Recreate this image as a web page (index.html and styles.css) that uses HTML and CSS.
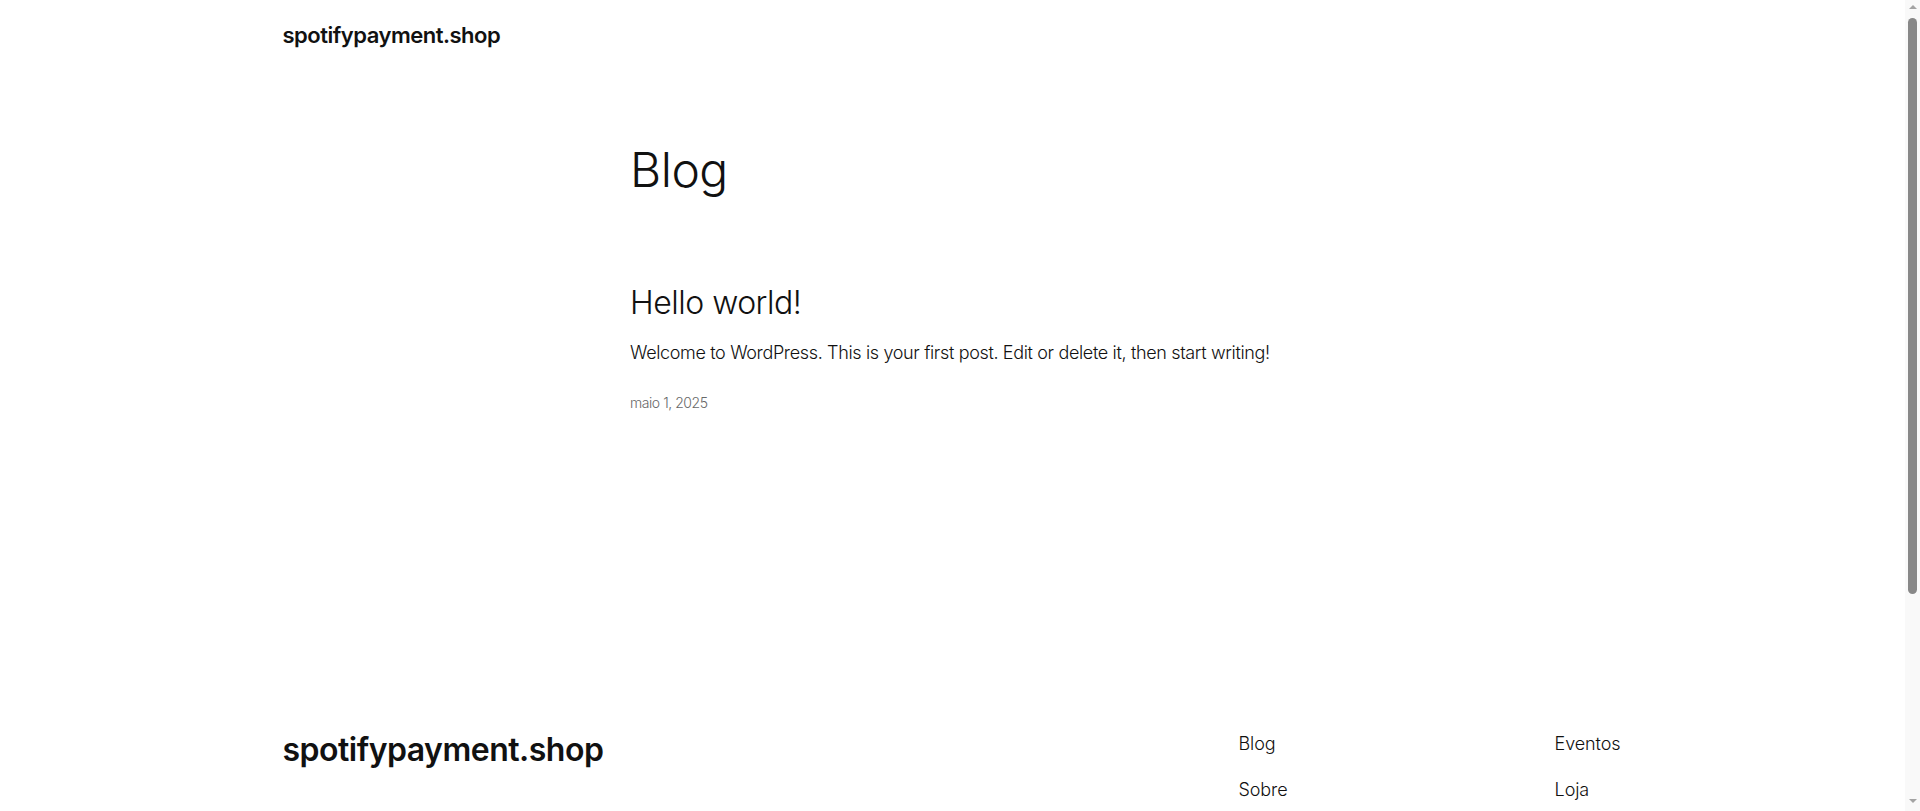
FILE: index.html
```html
<!DOCTYPE html>
<html lang="pt-BR">
<head>
    <meta charset="UTF-8">
    <meta name="viewport" content="width=device-width, initial-scale=1.0">
    <title>Blog – spotifypayment.shop</title>
    <link rel="stylesheet" href="styles.css">
</head>
<body>
    <header class="site-header">
        <a class="site-title" href="#">spotifypayment.shop</a>
    </header>

    <main class="content">
        <h1 class="page-title">Blog</h1>

        <article class="post">
            <h2 class="post-title"><a href="#">Hello world!</a></h2>
            <p class="post-excerpt">Welcome to WordPress. This is your first post. Edit or delete it, then start writing!</p>
            <div class="post-date">maio 1, 2025</div>
        </article>
    </main>

    <footer class="site-footer">
        <div class="footer-top">
            <a class="footer-title" href="#">spotifypayment.shop</a>
            <nav class="footer-links">
                <div class="footer-col">
                    <a href="#">Blog</a>
                    <a href="#">Sobre</a>
                    <a href="#">Perguntas frequentes</a>
                    <a href="#">Autores</a>
                </div>
                <div class="footer-col">
                    <a href="#">Eventos</a>
                    <a href="#">Loja</a>
                    <a href="#">Padrões</a>
                    <a href="#">Temas</a>
                </div>
            </nav>
        </div>
        <div class="footer-bottom">
            <span>Twenty Twenty-Five</span>
            <span>Desenvolvido com <a href="#">WordPress</a></span>
        </div>
    </footer>

    <!-- window scrollbar -->
    <div class="scrollbar" aria-hidden="true">
        <span class="scroll-arrow up"></span>
        <span class="scroll-thumb"></span>
        <span class="scroll-arrow down"></span>
    </div>
</body>
</html>
```

FILE: styles.css
```css
body {
    margin: 0;
    padding-right: 15px;
    font-family: Inter, "Noto Sans", sans-serif;
    font-weight: 300;
    font-size: 18px;
    line-height: 1.4;
    letter-spacing: -0.35px;
    color: #111111;
    background-color: #ffffff;
}

a {
    color: inherit;
    text-decoration: none;
}

.site-header {
    max-width: 1340px;
    height: 71px;
    margin: 0 auto;
    display: flex;
    align-items: center;
}

    .site-title {
        font-size: 22px;
        font-weight: 600;
        letter-spacing: -0.5px;
    }

.content {
    max-width: 645px;
    margin: 0 auto;
    padding: 72px 0 0;
    min-height: 587px;
}

.page-title {
    margin: 0;
    font-size: 48px;
    font-weight: 300;
    line-height: 1.125;
    letter-spacing: -0.5px;
}

.post {
    margin-top: 88px;
}

    .post-title {
        margin: 0;
        font-size: 32px;
        font-weight: 300;
        line-height: 1.125;
        letter-spacing: -0.5px;
    }

    .post-excerpt {
        margin: 19px 0 0;
    }

    .post-date {
        margin-top: 28px;
        font-size: 14px;
        letter-spacing: -0.45px;
        color: #686868;
    }

.site-footer {
    max-width: 1340px;
    margin: 0 auto;
    padding-top: 1px;
    padding-bottom: 70px;
}

.footer-top {
    display: flex;
    justify-content: space-between;
    align-items: flex-start;
}

    .footer-title {
        font-size: 32px;
        font-weight: 600;
        line-height: 1.2;
        letter-spacing: -0.5px;
    }

.footer-links {
    width: 384px;
    display: flex;
    justify-content: space-between;
    letter-spacing: -0.1px;
}

.footer-col {
    display: flex;
    flex-direction: column;
    gap: 21px;
}

.footer-bottom {
    margin-top: 90px;
    padding-top: 30px;
    display: flex;
    justify-content: space-between;
    font-size: 14px;
}

    .footer-bottom a {
        text-decoration: underline;
    }

.scrollbar {
    position: fixed;
    top: 0;
    right: 0;
    bottom: 0;
    width: 15px;
    background-color: #f9f9f9;
    display: flex;
    flex-direction: column;
    align-items: center;
}

.scroll-arrow {
    width: 0;
    height: 0;
    border-left: 4px solid transparent;
    border-right: 4px solid transparent;
}

    .scroll-arrow.up {
        margin-top: 5px;
        border-bottom: 4px solid #a3a3a3;
    }

    .scroll-arrow.down {
        margin-top: auto;
        margin-bottom: 8px;
        border-top: 4px solid #a3a3a3;
    }

.scroll-thumb {
    width: 9px;
    height: 576px;
    margin-top: 9px;
    border-radius: 5px;
    background-color: #888888;
}
```
